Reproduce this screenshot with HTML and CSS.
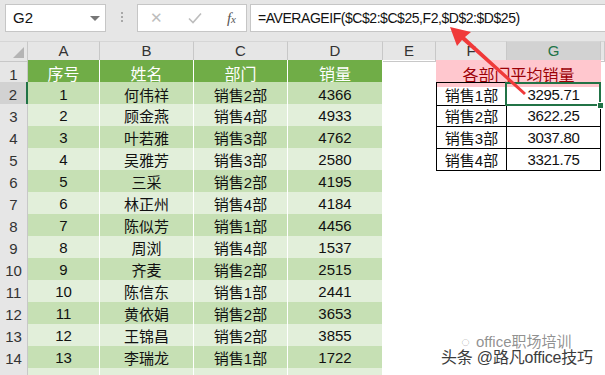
FILE: index.html
```html
<!DOCTYPE html>
<html lang="zh-CN">
<head>
<meta charset="utf-8" />
<title>AVERAGEIF 示例</title>
<link rel="stylesheet" href="styles.css">
</head>
<body>

<header class="toolbar">
	<div class="namebox">G2<span class="drop"></span></div>
	<div class="grip"><i></i><i></i><i></i></div>
	<div class="fxbox">
		<span class="cancel">&#x2715;</span>
		<svg class="enter" width="14" height="12" viewBox="0 0 14 12"><path d="M1 6.5 L5 10.5 L13 1.5" fill="none" stroke="#bdbdbd" stroke-width="1.6"/></svg>
		<span class="fx"><i>f</i><small>x</small></span>
	</div>
	<div class="formula">=AVERAGEIF($C$2:$C$25,F2,$D$2:$D$25)</div>
</header>

<main class="sheet">
	<div class="row heads">
		<div class="corner"></div>
		<div class="ch">A</div><div class="ch">B</div><div class="ch">C</div><div class="ch">D</div>
		<div class="ch">E</div><div class="ch">F</div><div class="ch on">G</div><div class="ch"></div>
	</div>

	<div class="row first">
		<div class="rh">1</div>
		<div class="c th">序号</div><div class="c th">姓名</div><div class="c th">部门</div><div class="c th">销量</div>
		<div class="c"></div>
		<div class="c pink">各部门平均销量</div>
		<div class="c"></div>
	</div>

	<div class="row">
		<div class="rh on">2</div>
		<div class="c dk">1</div><div class="c dk">何伟祥</div><div class="c dk">销售2部</div><div class="c dk">4366</div>
		<div class="c"></div><div class="c f top">销售1部</div><div class="c g top sel">3295.71</div><div class="c"></div>
	</div>
	<div class="row">
		<div class="rh">3</div>
		<div class="c lt">2</div><div class="c lt">顾金燕</div><div class="c lt">销售4部</div><div class="c lt">4933</div>
		<div class="c"></div><div class="c f">销售2部</div><div class="c g">3622.25</div><div class="c"></div>
	</div>
	<div class="row">
		<div class="rh">4</div>
		<div class="c dk">3</div><div class="c dk">叶若雅</div><div class="c dk">销售3部</div><div class="c dk">4762</div>
		<div class="c"></div><div class="c f">销售3部</div><div class="c g">3037.80</div><div class="c"></div>
	</div>
	<div class="row">
		<div class="rh">5</div>
		<div class="c lt">4</div><div class="c lt">吴雅芳</div><div class="c lt">销售3部</div><div class="c lt">2580</div>
		<div class="c"></div><div class="c f">销售4部</div><div class="c g">3321.75</div><div class="c"></div>
	</div>
	<div class="row">
		<div class="rh">6</div>
		<div class="c dk">5</div><div class="c dk">三采</div><div class="c dk">销售2部</div><div class="c dk">4195</div>
	</div>
	<div class="row">
		<div class="rh">7</div>
		<div class="c lt">6</div><div class="c lt">林正州</div><div class="c lt">销售4部</div><div class="c lt">4184</div>
	</div>
	<div class="row">
		<div class="rh">8</div>
		<div class="c dk">7</div><div class="c dk">陈似芳</div><div class="c dk">销售1部</div><div class="c dk">4456</div>
	</div>
	<div class="row">
		<div class="rh">9</div>
		<div class="c lt">8</div><div class="c lt">周浏</div><div class="c lt">销售4部</div><div class="c lt">1537</div>
	</div>
	<div class="row">
		<div class="rh">10</div>
		<div class="c dk">9</div><div class="c dk">齐麦</div><div class="c dk">销售2部</div><div class="c dk">2515</div>
	</div>
	<div class="row">
		<div class="rh">11</div>
		<div class="c lt">10</div><div class="c lt">陈信东</div><div class="c lt">销售1部</div><div class="c lt">2441</div>
	</div>
	<div class="row">
		<div class="rh">12</div>
		<div class="c dk">11</div><div class="c dk">黄依娟</div><div class="c dk">销售2部</div><div class="c dk">3653</div>
	</div>
	<div class="row">
		<div class="rh">13</div>
		<div class="c lt">12</div><div class="c lt">王锦昌</div><div class="c lt">销售2部</div><div class="c lt">3855</div>
	</div>
	<div class="row">
		<div class="rh">14</div>
		<div class="c dk">13</div><div class="c dk">李瑞龙</div><div class="c dk">销售1部</div><div class="c dk">1722</div>
	</div>
	<div class="row last">
		<div class="rh"></div>
		<div class="c lt"></div><div class="c lt"></div><div class="c lt"></div><div class="c lt"></div>
	</div>
</main>

<svg class="arrow" width="605" height="375" viewBox="0 0 605 375">
	<polygon points="450,27 471,32 465,37 526,93 524,95 462,40 457,46" fill="#f03a3a"/>
</svg>

<div class="mark">
	<div class="sub"><span class="bubble">&#x25CC;</span>office职场培训</div>
	<div class="main">头条 @路凡office技巧</div>
</div>

</body>
</html>
```

FILE: styles.css
```css
body {
	margin: 0;
	width: 605px;
	height: 375px;
	overflow: hidden;
	position: relative;
	background: #fff;
	font: 15px "Liberation Sans", "Noto Sans CJK SC", sans-serif;
	color: #111;
}

/* --------------------------------- */

.toolbar {
	display: flex;
	align-items: flex-start;
	height: 41px;
	padding: 4px 0 0 5px;
	box-sizing: border-box;
	background: #e6e6e6;
}
.namebox {
	position: relative;
	width: 101px;
	height: 28px;
	box-sizing: border-box;
	border: 1px solid #c6c6c6;
	background: #fff;
	padding-left: 7px;
	line-height: 26px;
	font-size: 15px;
}
.drop {
	position: absolute;
	right: 5px;
	top: 11px;
	border: 5px solid transparent;
	border-top: 5px solid #777;
	border-bottom: 0;
}
.grip {
	width: 31px;
	display: flex;
	flex-direction: column;
	align-items: center;
	gap: 2px;
	padding-top: 8px;
}
.grip i {
	width: 2px;
	height: 2px;
	background: #a8a8a8;
}
.fxbox {
	width: 110px;
	height: 28px;
	box-sizing: border-box;
	border: 1px solid #c6c6c6;
	background: #fff;
	display: flex;
	align-items: center;
	padding: 0 10px 0 12px;
	justify-content: space-between;
}
.cancel {
	color: #bdbdbd;
	font-size: 15px;
}
.fx {
	font-family: "Liberation Serif", serif;
	color: #555;
	font-size: 15px;
}
.fx small {
	font-size: 11px;
	font-style: italic;
}
.formula {
	margin-left: 3px;
	flex: 1;
	height: 28px;
	box-sizing: border-box;
	border: 1px solid #c6c6c6;
	border-right: none;
	background: #fff;
	padding-left: 7px;
	line-height: 26px;
	font-size: 14px;
	letter-spacing: -0.45px;
	white-space: nowrap;
}

/* --------------------------------- */

.sheet {
	--cols: 28px 72px 94px 94px 95px 53px 71px 94px 4px;
}
.row {
	display: grid;
	grid-template-columns: var(--cols);
	height: 22px;
}
.row.heads {
	height: 19px;
	background: #e6e6e6;
}
.corner {
	position: relative;
	border-right: 1px solid #c8c8c8;
	border-bottom: 1px solid #c8c8c8;
	border-top: 1px solid #d6d6d6;
}
.corner::after {
	content: "";
	position: absolute;
	right: 3px;
	bottom: 3px;
	border-left: 11px solid transparent;
	border-bottom: 11px solid #b4b4b4;
}
.ch {
	box-sizing: border-box;
	border-right: 1px solid #c8c8c8;
	border-bottom: 1px solid #c8c8c8;
	border-top: 1px solid #d6d6d6;
	text-align: center;
	line-height: 18px;
	font-size: 15px;
	color: #333;
}
.ch.on {
	background: #d2d2d2;
	border-bottom: 2px solid #217346;
	color: #217346;
}
.rh {
	box-sizing: border-box;
	background: #e6e6e6;
	border-right: 1px solid #c8c8c8;
	border-bottom: 1px solid #d4d4d4;
	display: flex;
	align-items: center;
	justify-content: center;
	padding-top: 2px;
	font-size: 15px;
	color: #333;
}
.rh.on {
	background: #d2d2d2;
	border-right: 2px solid #217346;
}

/* --------------------------------- */

.c {
	box-sizing: border-box;
	display: flex;
	align-items: center;
	justify-content: center;
	white-space: nowrap;
	padding-top: 1px;
}
.th {
	background: #70ad47;
	color: #fff;
	border-right: 1px solid #fff;
	border-bottom: 2px solid #fff;
	font-size: 16px;
}
.dk, .lt {
	border-right: 1px solid #fff;
	border-bottom: 1px solid #fff;
}
.dk { background: #c6e0b4; }
.lt { background: #e2efda; }

.pink {
	grid-column: span 2;
	background: #ffc7ce;
	color: #9c0006;
	font-size: 16px;
}
.f {
	border-left: 1px solid #000;
	border-right: 1px solid #000;
	border-bottom: 1px solid #000;
}
.g {
	border-right: 1px solid #000;
	border-bottom: 1px solid #000;
	letter-spacing: -0.3px;
}
.top { border-top: 1px solid #000; }
.sel { position: relative; }
.sel::before {
	content: "";
	position: absolute;
	inset: -1px -1px -1px -2px;
	border: 2px solid #217346;
}
.sel::after {
	content: "";
	position: absolute;
	right: -4px;
	bottom: -4px;
	width: 5px;
	height: 5px;
	background: #217346;
	border: 1px solid #fff;
}

/* --------------------------------- */

.arrow {
	position: absolute;
	left: 0;
	top: 0;
	pointer-events: none;
}
.mark {
	position: absolute;
	left: 441px;
	top: 336px;
	color: #3c3c3c;
	text-shadow: 0 0 2px #fff, 0 0 2px #fff;
}
.mark .sub {
	margin-left: 20px;
	font-size: 15px;
	line-height: 12px;
	color: rgba(70, 70, 70, 0.6);
}
.mark .bubble {
	margin-right: 6px;
}
.mark .main {
	font-size: 16px;
	line-height: 20px;
	letter-spacing: -0.2px;
}
```
